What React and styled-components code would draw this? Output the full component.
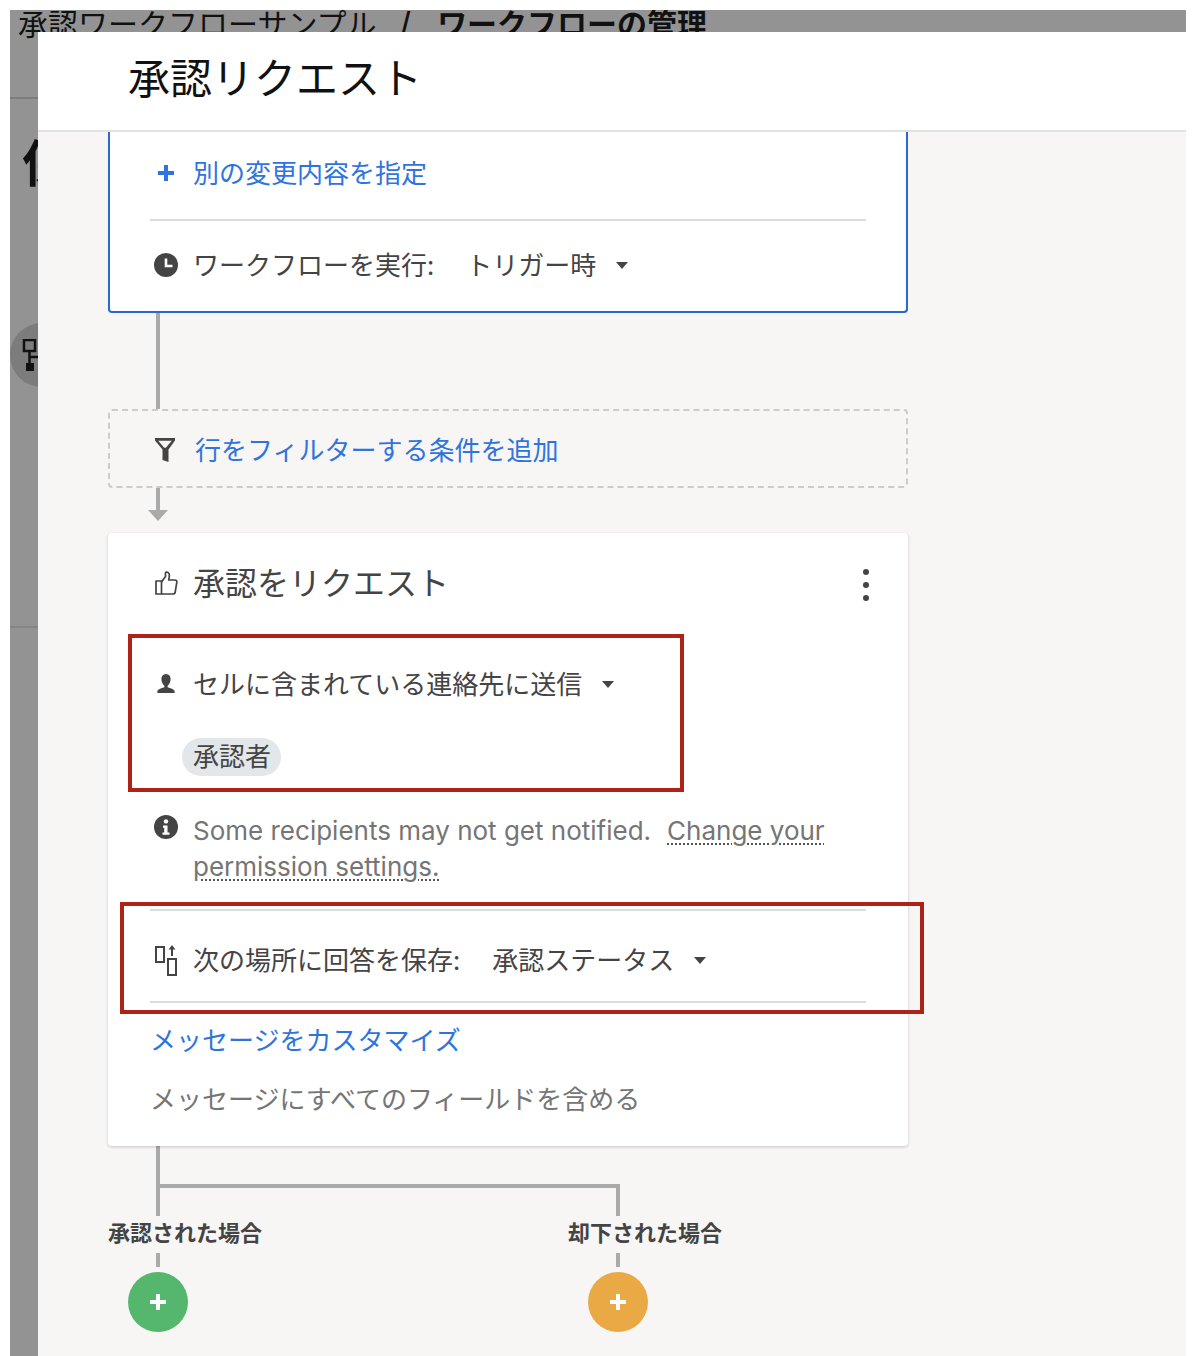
import React from 'react';
import styled, { createGlobalStyle } from 'styled-components';

const GlobalStyle = createGlobalStyle`
  html, body {
    margin: 0;
    padding: 0;
    background: #fff;
  }
  body {
    font-family: "Noto Sans CJK JP", "Noto Sans", sans-serif;
    color: #444;
  }
`;

const Page = styled.div`
  box-sizing: border-box;
  height: 1356px;
  padding: 10px 8px 0 10px;
  overflow: hidden;
`;

const Frame = styled.div`
  position: relative;
  height: 1346px;
  overflow: hidden;
  background: #939393;
`;

const Breadcrumb = styled.div`
  display: flex;
  height: 87px;
  padding-left: 8px;
  font-size: 30px;
  line-height: 24px;
  color: #111;
  border-bottom: 2px solid #7c7c7c;
`;

const Crumb = styled.span`
  font-weight: ${(p) => (p.$bold ? 700 : 400)};
  margin-left: ${(p) => p.$gap || 0}px;
`;

const BackHeading = styled.div`
  box-sizing: border-box;
  padding: 32px 0 0 12px;
  height: 132px;
  font-size: 50px;
  line-height: 58px;
  font-weight: 700;
  color: #111;
`;

const BackCircle = styled.div`
  width: 64px;
  height: 64px;
  margin-top: 92px;
  border-radius: 50%;
  background: #7c7c7c;
`;

const BackRule = styled.div`
  margin-top: 239px;
  height: 2px;
  background: #858585;
`;

const Modal = styled.div`
  position: absolute;
  top: 22px;
  left: 28px;
  right: 0;
  bottom: 0;
  background: #f7f6f5;
  overflow: hidden;
`;

const ModalHeader = styled.header`
  box-sizing: border-box;
  height: 100px;
  padding: 0 0 12px 90px;
  display: flex;
  align-items: center;
  background: #fff;
  border-bottom: 2px solid #e2e2e2;
  font-size: 42px;
  color: #111;
`;

const Canvas = styled.div`
  width: 800px;
  margin-left: 70px;
`;

const TriggerCard = styled.section`
  box-sizing: border-box;
  padding: 19px 40px 24px;
  background: #fff;
  border: 2px solid #2a66d9;
  border-top: none;
  border-radius: 0 0 4px 4px;
`;

const Card = styled.section`
  position: relative;
  box-sizing: border-box;
  padding: 0 42px 30px;
  background: #fff;
  border-radius: 4px;
  box-shadow: 0 1px 3px rgba(0, 0, 0, 0.2);
`;

const IconSlot = styled.span`
  flex: none;
  display: flex;
  justify-content: center;
  width: 32px;
  margin: 4px 11px 0 0;
`;

const NoticeIcon = styled(IconSlot)`
  margin-top: 2px;
`;

const Row = styled.div`
  box-sizing: border-box;
  display: flex;
  align-items: center;
  height: 44px;
  padding-bottom: 4px;
  margin-top: ${(p) => p.$top || 0}px;
  font-size: 26px;
  color: ${(p) => (p.$link ? '#2f74de' : '#444')};
`;

const Divider = styled.div`
  height: 2px;
  margin-top: ${(p) => p.$top || 0}px;
  background: #dcdcdc;
`;

const Value = styled.span`
  margin-left: 32px;
`;

const Caret = styled.span`
  width: 0;
  height: 0;
  margin: 4px 0 0 20px;
  border-left: 6px solid transparent;
  border-right: 6px solid transparent;
  border-top: 7px solid #444;
`;

const Stem = styled.div`
  width: 4px;
  height: ${(p) => p.$height}px;
  margin-left: 48px;
  background: #aaa;
`;

const ArrowHead = styled.div`
  width: 0;
  height: 0;
  margin: 0 0 12px 40px;
  border-left: 10px solid transparent;
  border-right: 10px solid transparent;
  border-top: 11px solid #aaa;
`;

const FilterBox = styled.div`
  box-sizing: border-box;
  display: flex;
  align-items: center;
  height: 79px;
  padding-left: 40px;
  border: 2px dashed #ccc;
  border-radius: 4px;
  font-size: 26px;
  color: #2f74de;
`;

const FilterIcon = styled.span`
  display: flex;
  width: 30px;
  justify-content: center;
  margin: 2px 15px 0 0;
`;

const CardHeader = styled.div`
  box-sizing: border-box;
  display: flex;
  align-items: center;
  height: 100px;
  padding-bottom: 4px;
  font-size: 32px;
  color: #444;
`;

const Dots = styled.div`
  margin: 8px -3px 0 auto;
  display: flex;
  flex-direction: column;
  gap: 7px;
`;

const Dot = styled.span`
  width: 6px;
  height: 6px;
  border-radius: 50%;
  background: #444;
`;

const Chip = styled.div`
  display: inline-block;
  height: 38px;
  line-height: 33px;
  margin: 32px 0 0 32px;
  padding: 0 10px 0 11px;
  border-radius: 19px;
  background: #e3e7ea;
  font-size: 26px;
  color: #444;
`;

const Notice = styled.div`
  display: flex;
  margin-top: 37px;
`;

const NoticeText = styled.p`
  margin: 0;
  font-family: Inter, Roboto, sans-serif;
  font-size: 26px;
  line-height: 36px;
  color: #757575;
`;

const NoticeLink = styled.span`
  margin-left: 16px;
  text-decoration: underline dotted #555 2px;
  text-underline-offset: 3px;
`;

const CardLink = styled.div`
  margin-top: ${(p) => p.$top}px;
  font-size: 26px;
  line-height: 36px;
  color: ${(p) => p.$color};
`;

const Highlight = styled.div`
  position: absolute;
  box-sizing: border-box;
  left: ${(p) => p.$left}px;
  top: ${(p) => p.$top}px;
  width: ${(p) => p.$width}px;
  height: ${(p) => p.$height}px;
  border: 4px solid #ae2318;
  pointer-events: none;
`;

const Fork = styled.div`
  box-sizing: border-box;
  width: 464px;
  height: 32px;
  margin-left: 48px;
  border: 4px solid #aaa;
  border-bottom: none;
`;

const Branches = styled.div`
  display: flex;
`;

const Branch = styled.div`
  flex: none;
  width: 460px;
`;

const BranchLabel = styled.div`
  height: 37px;
  font-size: 22px;
  line-height: 30px;
  font-weight: 700;
  color: #444;
`;

const AddButton = styled.button`
  display: flex;
  align-items: center;
  justify-content: center;
  width: 60px;
  height: 60px;
  margin: 5px 0 0 20px;
  padding: 0;
  border: none;
  border-radius: 50%;
  background: ${(p) => p.$color};
`;

const PlusIcon = ({ color, size = 16 }) => (
  <svg width={size} height={size} viewBox="0 0 16 16">
    <path d="M6 0h4v6h6v4h-6v6H6v-6H0V6h6z" fill={color} />
  </svg>
);

const ClockIcon = () => (
  <svg width="24" height="24" viewBox="0 0 24 24">
    <circle cx="12" cy="12" r="12" fill="#444" />
    <path d="M12 5.500V13h6.500" fill="none" stroke="#fff" strokeWidth="2.600" />
  </svg>
);

const FunnelIcon = () => (
  <svg width="20" height="24" viewBox="0 0 20 24">
    <path d="M0 0h20v2.500l-6.500 9V24L7.500 22V11.500L0 2.500zM3.200 2.800l6 7h1.600l6-7z" fill="#444" fillRule="evenodd" />
  </svg>
);

const ThumbIcon = () => (
  <svg width="23" height="24" viewBox="0 0 23 24" fill="none" stroke="#444" strokeWidth="1.700" strokeLinejoin="round">
    <path d="M1 10h5.500v13H1z" />
    <path d="M6.500 11L10.500 5.500V2c0-1.300 2.800-1.300 3.600.7.600 1.500.3 3.800-.4 6.300H19.800c1.500 0 2.300 1 2 2.300L20.200 21c-.2 1.200-1 2-2.200 2H6.500" />
  </svg>
);

const PersonIcon = () => (
  <svg width="18" height="22" viewBox="0 0 18 22">
    <path d="M9 1c3 0 4.600 2.200 4.600 5s-1.600 6-3 6.800v1.400c3 .8 6.400 2 6.900 3.600.3 1 .1 2.200.1 2.200H.4S.2 18.800.5 17.800c.5-1.600 3.900-2.800 6.900-3.600v-1.400C6 12 4.400 8.800 4.400 6S6 1 9 1z" fill="#444" />
  </svg>
);

const InfoIcon = () => (
  <svg width="24" height="24" viewBox="0 0 24 24">
    <circle cx="12" cy="12" r="12" fill="#444" />
    <circle cx="12" cy="6.400" r="2.200" fill="#fff" />
    <path d="M9 10.500h4.500v7H15.500v2.200h-7v-2.200h1.700v-4.800H9z" fill="#fff" />
  </svg>
);

const SaveIcon = () => (
  <svg width="22" height="31" viewBox="0 0 22 31">
    <path d="M1 2h8v15H1zM13 14h8v16h-8z" fill="none" stroke="#444" strokeWidth="2" />
    <path d="M17 11V3" stroke="#444" strokeWidth="2" />
    <path d="M13.500 4.500L17 0l3.500 4.500z" fill="#444" />
  </svg>
);

const WorkflowIcon = styled.svg`
  display: block;
  padding: 16px 0 0 12px;
`;

const Backdrop = () => (
  <>
    <Breadcrumb>
      <Crumb>承認ワークフローサンプル</Crumb>
      <Crumb $bold $gap={23}>/</Crumb>
      <Crumb $bold $gap={26}>ワークフローの管理</Crumb>
    </Breadcrumb>
    <BackHeading>保</BackHeading>
    <BackCircle>
      <WorkflowIcon width="26" height="34" viewBox="0 0 26 34">
        <path d="M2 1h11v11H2z" fill="none" stroke="#111" strokeWidth="2.500" />
        <path d="M7.500 12v12M7.500 18H26" stroke="#111" strokeWidth="2.500" />
        <path d="M4 24h8v8H4z" fill="#111" />
      </WorkflowIcon>
    </BackCircle>
    <BackRule />
  </>
);

const App = () => {
  return (
    <>
      <GlobalStyle />
      <Page>
        <Frame>
          <Backdrop />
          <Modal>
            <ModalHeader>承認リクエスト</ModalHeader>
            <Canvas>
              <TriggerCard>
                <Row $link>
                  <IconSlot><PlusIcon color="#2f74de" /></IconSlot>
                  別の変更内容を指定
                </Row>
                <Divider $top={24} />
                <Row $top={22}>
                  <IconSlot><ClockIcon /></IconSlot>
                  ワークフローを実行:
                  <Value>トリガー時</Value>
                  <Caret />
                </Row>
              </TriggerCard>

              <Stem $height={96} />
              <FilterBox>
                <FilterIcon><FunnelIcon /></FilterIcon>
                行をフィルターする条件を追加
              </FilterBox>
              <Stem $height={22} />
              <ArrowHead />

              <Card>
                <CardHeader>
                  <IconSlot><ThumbIcon /></IconSlot>
                  承認をリクエスト
                  <Dots><Dot /><Dot /><Dot /></Dots>
                </CardHeader>
                <Row $top={29}>
                  <IconSlot><PersonIcon /></IconSlot>
                  セルに含まれている連絡先に送信
                  <Caret />
                </Row>
                <Chip>承認者</Chip>
                <Notice>
                  <NoticeIcon><InfoIcon /></NoticeIcon>
                  <NoticeText>
                    Some recipients may not get notified.
                    <NoticeLink>Change your permission settings.</NoticeLink>
                  </NoticeText>
                </Notice>
                <Divider $top={24} />
                <Row $top={27}>
                  <IconSlot><SaveIcon /></IconSlot>
                  次の場所に回答を保存:
                  <Value>承認ステータス</Value>
                  <Caret />
                </Row>
                <Divider $top={19} />
                <CardLink $top={18} $color="#2f74de">メッセージをカスタマイズ</CardLink>
                <CardLink $top={23} $color="#757575">メッセージにすべてのフィールドを含める</CardLink>
                <Highlight $left={20} $top={101} $width={556} $height={158} />
                <Highlight $left={12} $top={369} $width={804} $height={112} />
              </Card>

              <Stem $height={38} />
              <Fork />
              <Branches>
                <Branch>
                  <BranchLabel>承認された場合</BranchLabel>
                  <Stem $height={14} />
                  <AddButton $color="#55b66e"><PlusIcon color="#fff" /></AddButton>
                </Branch>
                <Branch>
                  <BranchLabel>却下された場合</BranchLabel>
                  <Stem $height={14} />
                  <AddButton $color="#e9a944"><PlusIcon color="#fff" /></AddButton>
                </Branch>
              </Branches>
            </Canvas>
          </Modal>
        </Frame>
      </Page>
    </>
  );
};

export default App;
